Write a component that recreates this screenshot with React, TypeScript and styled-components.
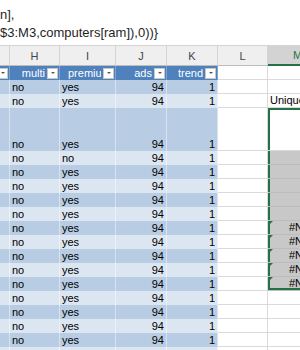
import styled, { createGlobalStyle, css } from "styled-components";

const GlobalStyle = createGlobalStyle`
  body {
    margin: 0;
    overflow: hidden;
    background: #ffffff;
    font-family: "Liberation Sans", Arial, sans-serif;
  }
`;

const GREEN = "#217346";
const COLS = "10px 50px 56px 51px 51px 50px 60px";

type Band = "dark" | "light";
type MKind = "blank" | "label" | "selTop" | "gray" | "na";

interface RowData {
  h: number;
  premium: string;
  m: MKind;
  last?: boolean;
}

const rows: RowData[] = [
  { h: 14, premium: "yes", m: "blank" },
  { h: 14, premium: "yes", m: "label" },
  { h: 43, premium: "yes", m: "selTop" },
  { h: 14, premium: "no", m: "gray" },
  { h: 14, premium: "yes", m: "gray" },
  { h: 14, premium: "yes", m: "gray" },
  { h: 14, premium: "yes", m: "gray" },
  { h: 14, premium: "yes", m: "gray" },
  { h: 14, premium: "yes", m: "na" },
  { h: 14, premium: "yes", m: "na" },
  { h: 14, premium: "yes", m: "na" },
  { h: 14, premium: "yes", m: "na" },
  { h: 14, premium: "yes", m: "na", last: true },
  { h: 14, premium: "yes", m: "blank" },
  { h: 14, premium: "yes", m: "blank" },
  { h: 14, premium: "yes", m: "blank" },
  { h: 14, premium: "yes", m: "blank" },
  { h: 14, premium: "yes", m: "blank" },
];

const formula = ["n],", "$3:M3,computers[ram]),0))}"];

const Sheet = styled.div`
  width: 300px;
  overflow: hidden;
`;

const FormulaBar = styled.div`
  box-sizing: border-box;
  height: 46px;
  padding-top: 6px;
  background: #ffffff;
  border-bottom: 1px solid #d4d4d4;
  font-size: 13px;
  line-height: 18px;
  color: #1f1f1f;
  white-space: nowrap;
`;

const Grid = styled.div`
  display: grid;
  grid-template-columns: ${COLS};
  grid-template-rows: 20px 14px ${rows.map((r) => `${r.h}px`).join(" ")};
`;

const ColHead = styled.div<{ $active?: boolean }>`
  box-sizing: border-box;
  display: flex;
  align-items: center;
  justify-content: center;
  font-size: 11px;
  color: #444444;
  background: #efefef;
  border-right: 1px solid #d4d4d4;
  border-bottom: 1px solid #bdbdbd;
  ${(p) =>
    p.$active &&
    css`
      background: #d3d3d3;
      color: ${GREEN};
      border-bottom: 2px solid ${GREEN};
    `}
`;

const HeadCell = styled.div<{ $start?: boolean }>`
  box-sizing: border-box;
  display: flex;
  align-items: center;
  justify-content: ${(p) => (p.$start ? "flex-start" : "flex-end")};
  gap: 2px;
  overflow: hidden;
  padding: 0 1px 0 ${(p) => (p.$start ? "8px" : "0")};
  background: #4f81bd;
  color: #ffffff;
  font-size: 11px;
  border-right: 1px solid #7fa2cf;
`;

const HeadText = styled.span`
  white-space: nowrap;
  flex-shrink: 1;
  overflow: hidden;
`;

const FilterButton = styled.span`
  box-sizing: border-box;
  flex: none;
  width: 11px;
  height: 11px;
  background: #ffffff;
  border: 1px solid #c8c8c8;
  display: flex;
  align-items: center;
  justify-content: center;
  &::after {
    content: "";
    border-left: 2px solid transparent;
    border-right: 2px solid transparent;
    border-top: 2px solid #595959;
  }
`;

const DataCell = styled.div<{ $band: Band; $right?: boolean }>`
  box-sizing: border-box;
  display: flex;
  align-items: flex-end;
  justify-content: ${(p) => (p.$right ? "flex-end" : "flex-start")};
  padding: 0 2px 0 2px;
  background: ${(p) => (p.$band === "dark" ? "#b8cce4" : "#dce6f1")};
  border-right: 1px solid rgba(255, 255, 255, 0.45);
  font-size: 11px;
  line-height: 13px;
  color: #000000;
  white-space: nowrap;
`;

const PlainCell = styled.div`
  box-sizing: border-box;
  border-right: 1px solid #dadada;
  border-bottom: 1px solid #dadada;
  background: #ffffff;
`;

const MCell = styled.div<{ $kind: MKind; $last?: boolean }>`
  position: relative;
  box-sizing: border-box;
  display: flex;
  align-items: flex-end;
  padding: 0 3px 0 2px;
  font-size: 11px;
  line-height: 13px;
  white-space: nowrap;
  color: #000000;
  background: #ffffff;
  border-bottom: 1px solid #dadada;
  ${(p) =>
    (p.$kind === "gray" || p.$kind === "na") &&
    css`
      background: #c8c8c8;
      border-bottom: 1px solid #bcbcbc;
      box-shadow: inset 2px 0 0 ${GREEN}
        ${p.$last ? `, inset 0 -2px 0 ${GREEN}` : ""};
    `}
  ${(p) =>
    p.$kind === "selTop" &&
    css`
      box-shadow: inset 2px 0 0 ${GREEN}, inset 0 2px 0 ${GREEN};
    `}
  ${(p) =>
    p.$kind === "na" &&
    css`
      padding-left: 21px;
      &::before {
        content: "";
        position: absolute;
        left: 1px;
        top: 0;
        border-top: 4px solid ${GREEN};
        border-right: 4px solid transparent;
      }
    `}
`;

const letters = ["", "H", "I", "J", "K", "L", "M"];

export default function App() {
  return (
    <Sheet>
      <GlobalStyle />
      <FormulaBar>
        {formula.map((line) => (
          <div key={line}>{line}</div>
        ))}
      </FormulaBar>
      <Grid>
        {letters.map((l) => (
          <ColHead key={l || "G"} $active={l === "M"}>
            {l}
          </ColHead>
        ))}

        <HeadCell>
          <FilterButton />
        </HeadCell>
        <HeadCell>
          <HeadText>multi</HeadText>
          <FilterButton />
        </HeadCell>
        <HeadCell $start>
          <HeadText>premium</HeadText>
          <FilterButton />
        </HeadCell>
        <HeadCell>
          <HeadText>ads</HeadText>
          <FilterButton />
        </HeadCell>
        <HeadCell>
          <HeadText>trend</HeadText>
          <FilterButton />
        </HeadCell>
        <PlainCell />
        <PlainCell />

        {rows.map((r, i) => {
          const band: Band = i % 2 === 0 ? "dark" : "light";
          return [
            <DataCell key={`g${i}`} $band={band} />,
            <DataCell key={`h${i}`} $band={band}>
              no
            </DataCell>,
            <DataCell key={`i${i}`} $band={band}>
              {r.premium}
            </DataCell>,
            <DataCell key={`j${i}`} $band={band} $right>
              94
            </DataCell>,
            <DataCell key={`k${i}`} $band={band} $right>
              1
            </DataCell>,
            <PlainCell key={`l${i}`} />,
            <MCell key={`m${i}`} $kind={r.m} $last={r.last}>
              {r.m === "label" ? "Unique" : r.m === "na" ? "#N/A" : ""}
            </MCell>,
          ];
        })}
      </Grid>
    </Sheet>
  );
}
